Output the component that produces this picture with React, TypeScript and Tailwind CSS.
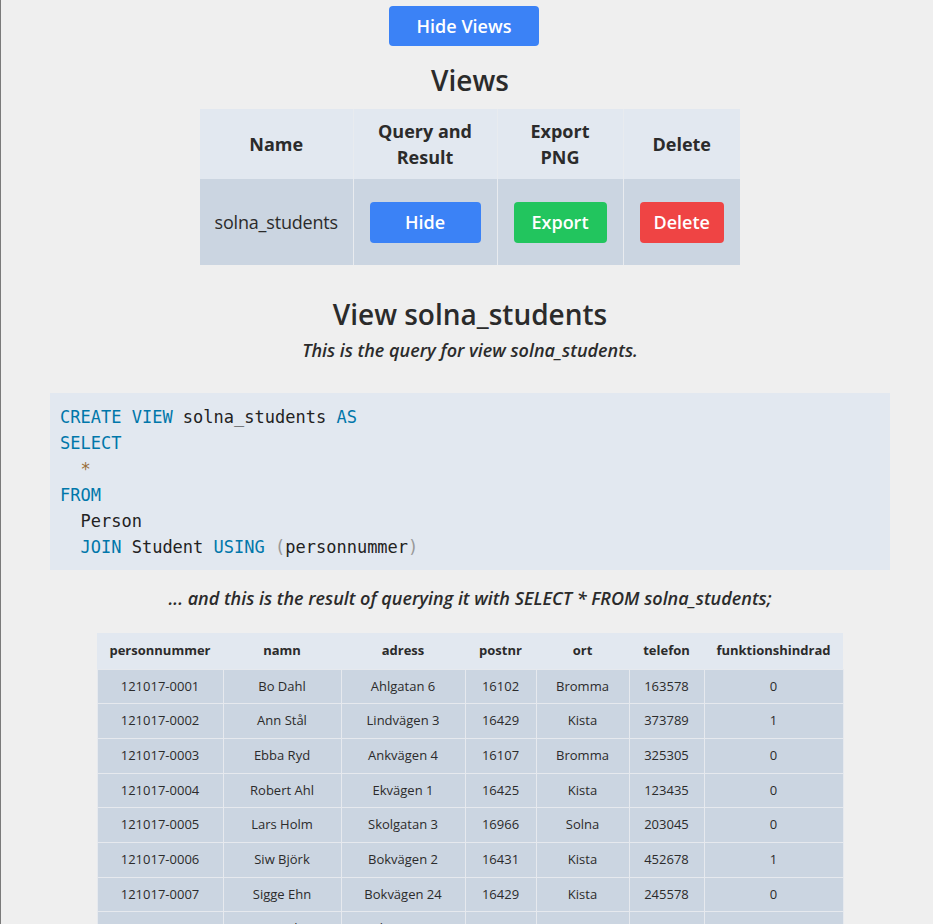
import React from 'react'

const rows = [
  ['121017-0001', 'Bo Dahl', 'Ahlgatan 6', '16102', 'Bromma', '163578', '0'],
  ['121017-0002', 'Ann Stål', 'Lindvägen 3', '16429', 'Kista', '373789', '1'],
  ['121017-0003', 'Ebba Ryd', 'Ankvägen 4', '16107', 'Bromma', '325305', '0'],
  ['121017-0004', 'Robert Ahl', 'Ekvägen 1', '16425', 'Kista', '123435', '0'],
  ['121017-0005', 'Lars Holm', 'Skolgatan 3', '16966', 'Solna', '203045', '0'],
  ['121017-0006', 'Siw Björk', 'Bokvägen 2', '16431', 'Kista', '452678', '1'],
  ['121017-0007', 'Sigge Ehn', 'Bokvägen 24', '16429', 'Kista', '245578', '0'],
  ['121017-0008', 'Eva Ek', 'Ekvägen 9', '16425', 'Kista', '123987', '0'],
]

const cols = [
  { name: 'personnummer', w: 'w-[126px]' },
  { name: 'namn', w: 'w-[118px]' },
  { name: 'adress', w: 'w-[124px]' },
  { name: 'postnr', w: 'w-[71px]' },
  { name: 'ort', w: 'w-[93px]' },
  { name: 'telefon', w: 'w-[75px]' },
  { name: 'funktionshindrad', w: 'w-[139px]' },
]

const Kw = ({ children }: { children: React.ReactNode }) => <span className="text-[#0077aa]">{children}</span>

export default function App() {
  return (
    <div className="min-h-[924px] bg-[#efefef] border-l border-[#7a7a7a] text-[#2b2b2b] font-['Open_Sans','Noto_Sans',sans-serif]">
      <div className="flex flex-col items-center pt-[6px] pl-[6px]">
        <button className="mr-[12px] w-[150px] h-[40px] rounded bg-[#3b82f6] text-white text-[18px] font-semibold">
          Hide Views
        </button>

        <h2 className="mt-[16px] text-[28px] leading-[36px] font-semibold">Views</h2>

        {/* views list */}
        <table className="mt-[11px] w-[540px] table-fixed border-collapse text-[18px]">
          <thead>
            <tr className="bg-[#e2e8f0]">
              <th className="w-[153px] px-4 py-[9px] leading-[26px] font-bold">Name</th>
              <th className="w-[144px] px-4 py-[9px] leading-[26px] font-bold border-x border-[#e8ebef]">
                Query and
                <br />
                Result
              </th>
              <th className="w-[126px] px-4 py-[9px] leading-[26px] font-bold border-r border-[#e8ebef]">
                Export
                <br />
                PNG
              </th>
              <th className="w-[117px] px-4 py-[9px] leading-[26px] font-bold">Delete</th>
            </tr>
          </thead>
          <tbody>
            <tr className="bg-[#cbd5e1] h-[86px]">
              <td className="px-2 text-center tracking-[-0.2px]">solna_students</td>
              <td className="px-4 border-x border-[#e8ebef]">
                <button className="w-full h-[41px] rounded bg-[#3b82f6] text-white font-semibold">Hide</button>
              </td>
              <td className="px-4 border-r border-[#e8ebef]">
                <button className="w-full h-[41px] rounded bg-[#22c55e] text-white font-semibold">Export</button>
              </td>
              <td className="px-4">
                <button className="w-full h-[41px] rounded bg-[#ef4444] text-white font-semibold">Delete</button>
              </td>
            </tr>
          </tbody>
        </table>

        <h2 className="mt-[31px] text-[28px] leading-[36px] font-semibold">View solna_students</h2>
        <p className="mt-[5px] text-[18px] leading-[26px] italic font-semibold">
          This is the query for view solna_students.
        </p>

        {/* query */}
        <pre className="mt-[30px] w-[840px] bg-[#e2e8f0] pt-[11px] pb-[10px] px-[10px] text-[17px] leading-[26px] text-[#222] font-['DejaVu_Sans_Mono',monospace]">
          <Kw>CREATE</Kw> <Kw>VIEW</Kw> solna_students <Kw>AS</Kw>
          {'\n'}
          <Kw>SELECT</Kw>
          {'\n  '}
          <span className="text-[#9a6e3a]">*</span>
          {'\n'}
          <Kw>FROM</Kw>
          {'\n  '}Person{'\n  '}
          <Kw>JOIN</Kw> Student <Kw>USING</Kw> <span className="text-[#999]">(</span>personnummer
          <span className="text-[#999]">)</span>
        </pre>

        <p className="mt-[15px] text-[18px] leading-[26px] italic font-semibold">
          ... and this is the result of querying it with SELECT * FROM solna_students;
        </p>

        {/* result */}
        <table className="mt-[22px] table-fixed border-collapse text-[13px] text-center">
          <thead>
            <tr className="bg-[#e2e8f0] h-[36px]">
              {cols.map((c) => (
                <th key={c.name} className={`${c.w} font-bold`}>
                  {c.name}
                </th>
              ))}
            </tr>
          </thead>
          <tbody>
            {rows.map((r) => (
              <tr key={r[0]} className="bg-[#cbd5e1] h-[34.7px]">
                {r.map((v, i) => (
                  <td key={i} className="border border-[#e6e9ee]">
                    {v}
                  </td>
                ))}
              </tr>
            ))}
          </tbody>
        </table>
      </div>
    </div>
  )
}
